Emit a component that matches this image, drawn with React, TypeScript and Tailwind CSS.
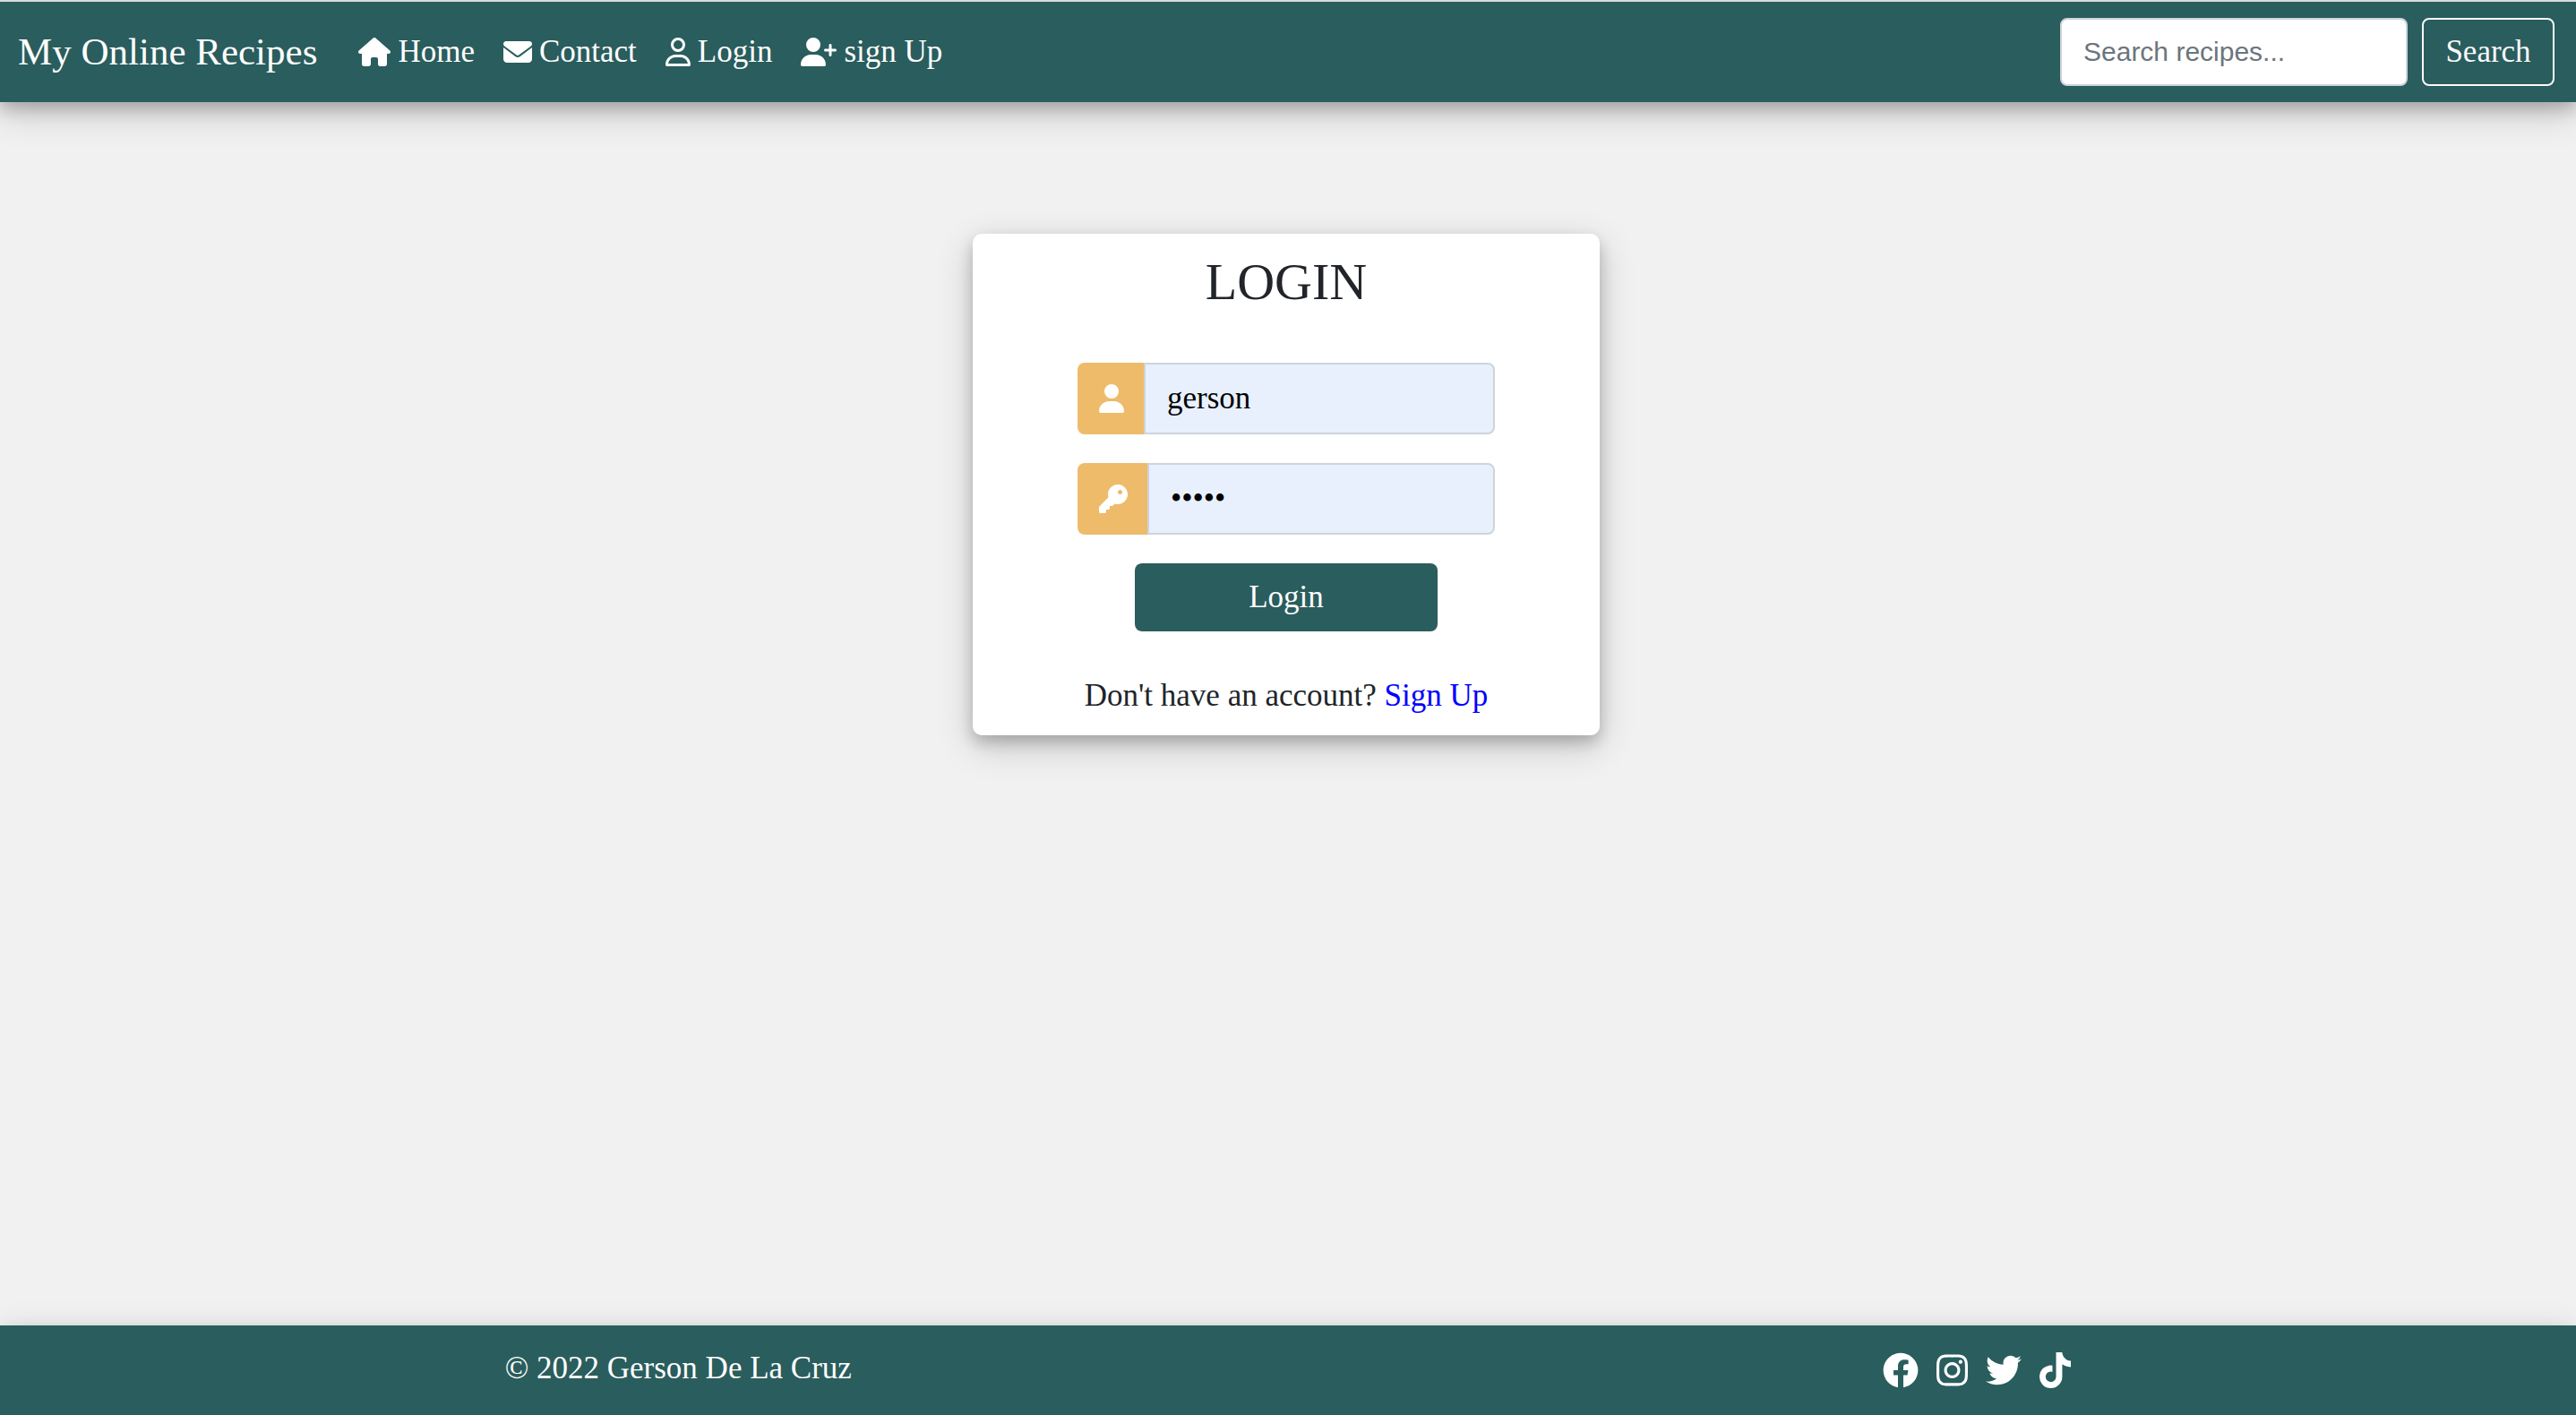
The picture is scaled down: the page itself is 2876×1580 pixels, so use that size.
import type { ReactNode } from "react";
import { FaFacebook, FaInstagram, FaTiktok, FaTwitter } from "react-icons/fa";
import { FaEnvelope, FaHouse, FaKey, FaRegUser, FaUser, FaUserPlus } from "react-icons/fa6";

function NavLink({ icon, children }: { icon: ReactNode; children: ReactNode }) {
  return (
    <li>
      <a href="#" className="flex items-center gap-2">
        {icon}
        <span>{children}</span>
      </a>
    </li>
  );
}

function Header() {
  return (
    <header className="flex items-center justify-between border-t-2 border-[#d8dbde] bg-[#2a5d5d] py-[18px] pr-6 pl-5 text-white shadow-[0_8px_16px_rgba(0,0,0,0.2),0_12px_40px_rgba(0,0,0,0.19)]">
      <nav className="flex items-center gap-[46px]">
        <a href="#" className="text-[43px] leading-[60px]">
          My Online Recipes
        </a>
        <ul className="flex items-center gap-8">
          <NavLink icon={<FaHouse className="h-8 w-9" />}>Home</NavLink>
          <NavLink icon={<FaEnvelope className="size-8" />}>Contact</NavLink>
          <NavLink icon={<FaRegUser className="h-8 w-7" />}>Login</NavLink>
          <NavLink icon={<FaUserPlus className="h-8 w-10" />}>sign Up</NavLink>
        </ul>
      </nav>
      <form className="flex gap-4" role="search" onSubmit={(e) => e.preventDefault()}>
        <input
          type="search"
          aria-label="Search recipes"
          placeholder="Search recipes..."
          className="h-[76px] w-[388px] rounded-lg border-2 border-[#ced4da] bg-white px-6 font-['Liberation_Sans',sans-serif] text-[30px] text-[#212529] placeholder:text-[#6c757d]"
        />
        <button type="submit" className="h-[76px] w-[148px] rounded-lg border-2 border-[#f8f9fa] text-[#f8f9fa]">
          Search
        </button>
      </form>
    </header>
  );
}

function Field({
  id,
  label,
  type,
  value,
  icon,
}: {
  id: string;
  label: string;
  type: string;
  value: string;
  icon: ReactNode;
}) {
  return (
    <div className="flex h-20 w-full">
      <label
        htmlFor={id}
        aria-label={label}
        className="flex items-center rounded-l-lg bg-[#eebb6b] pr-[22px] pl-6 text-white"
      >
        {icon}
      </label>
      <input
        id={id}
        type={type}
        aria-label={label}
        defaultValue={value}
        className="min-w-0 flex-1 rounded-r-lg border-2 border-[#ced4da] bg-[#e8f0fe] px-6 text-black"
      />
    </div>
  );
}

function LoginCard() {
  return (
    <section className="flex w-[700px] flex-col items-center rounded-[10px] bg-white pt-5 pb-5 text-[#212529] shadow-[0_8px_16px_rgba(0,0,0,0.2),0_12px_40px_rgba(0,0,0,0.19)]">
      <h1 className="text-[58px] leading-[68px] font-medium">LOGIN</h1>
      <form className="mt-14 flex w-[466px] flex-col items-center gap-8" onSubmit={(e) => e.preventDefault()}>
        <Field id="username" label="Username" type="text" value="gerson" icon={<FaUser className="h-8 w-7" />} />
        <Field id="password" label="Password" type="password" value="admin" icon={<FaKey className="size-8" />} />
        <button type="submit" className="h-[76px] w-[338px] rounded-lg bg-[#2a5d5d] text-white">
          Login
        </button>
      </form>
      <p className="mt-12">
        Don't have an account?{" "}
        <a href="#" className="text-[#0000ff]">
          Sign Up
        </a>
      </p>
    </section>
  );
}

function Footer() {
  return (
    <footer className="bg-[#2a5d5d] px-[19.6%] pt-6 pb-7 text-white shadow-[0_8px_16px_rgba(0,0,0,0.2),0_12px_40px_rgba(0,0,0,0.19)]">
      <div className="flex justify-between">
        <p>© 2022 Gerson De La Cruz</p>
        <ul className="flex items-center gap-5 pt-1">
          <li>
            <a href="#" aria-label="Facebook">
              <FaFacebook className="size-10" />
            </a>
          </li>
          <li>
            <a href="#" aria-label="Instagram">
              <FaInstagram className="h-10 w-[35px]" />
            </a>
          </li>
          <li>
            <a href="#" aria-label="Twitter">
              <FaTwitter className="size-10" />
            </a>
          </li>
          <li>
            <a href="#" aria-label="TikTok">
              <FaTiktok className="h-10 w-[35px]" />
            </a>
          </li>
        </ul>
      </div>
    </footer>
  );
}

export default function App() {
  return (
    <div className="flex min-h-screen flex-col bg-[#f1f1f1] font-[Georgia,'Liberation_Serif',serif] text-[35px] leading-[48px]">
      <Header />
      <main className="flex flex-1 flex-col items-center pt-[147px] pr-1">
        <LoginCard />
      </main>
      <Footer />
    </div>
  );
}
